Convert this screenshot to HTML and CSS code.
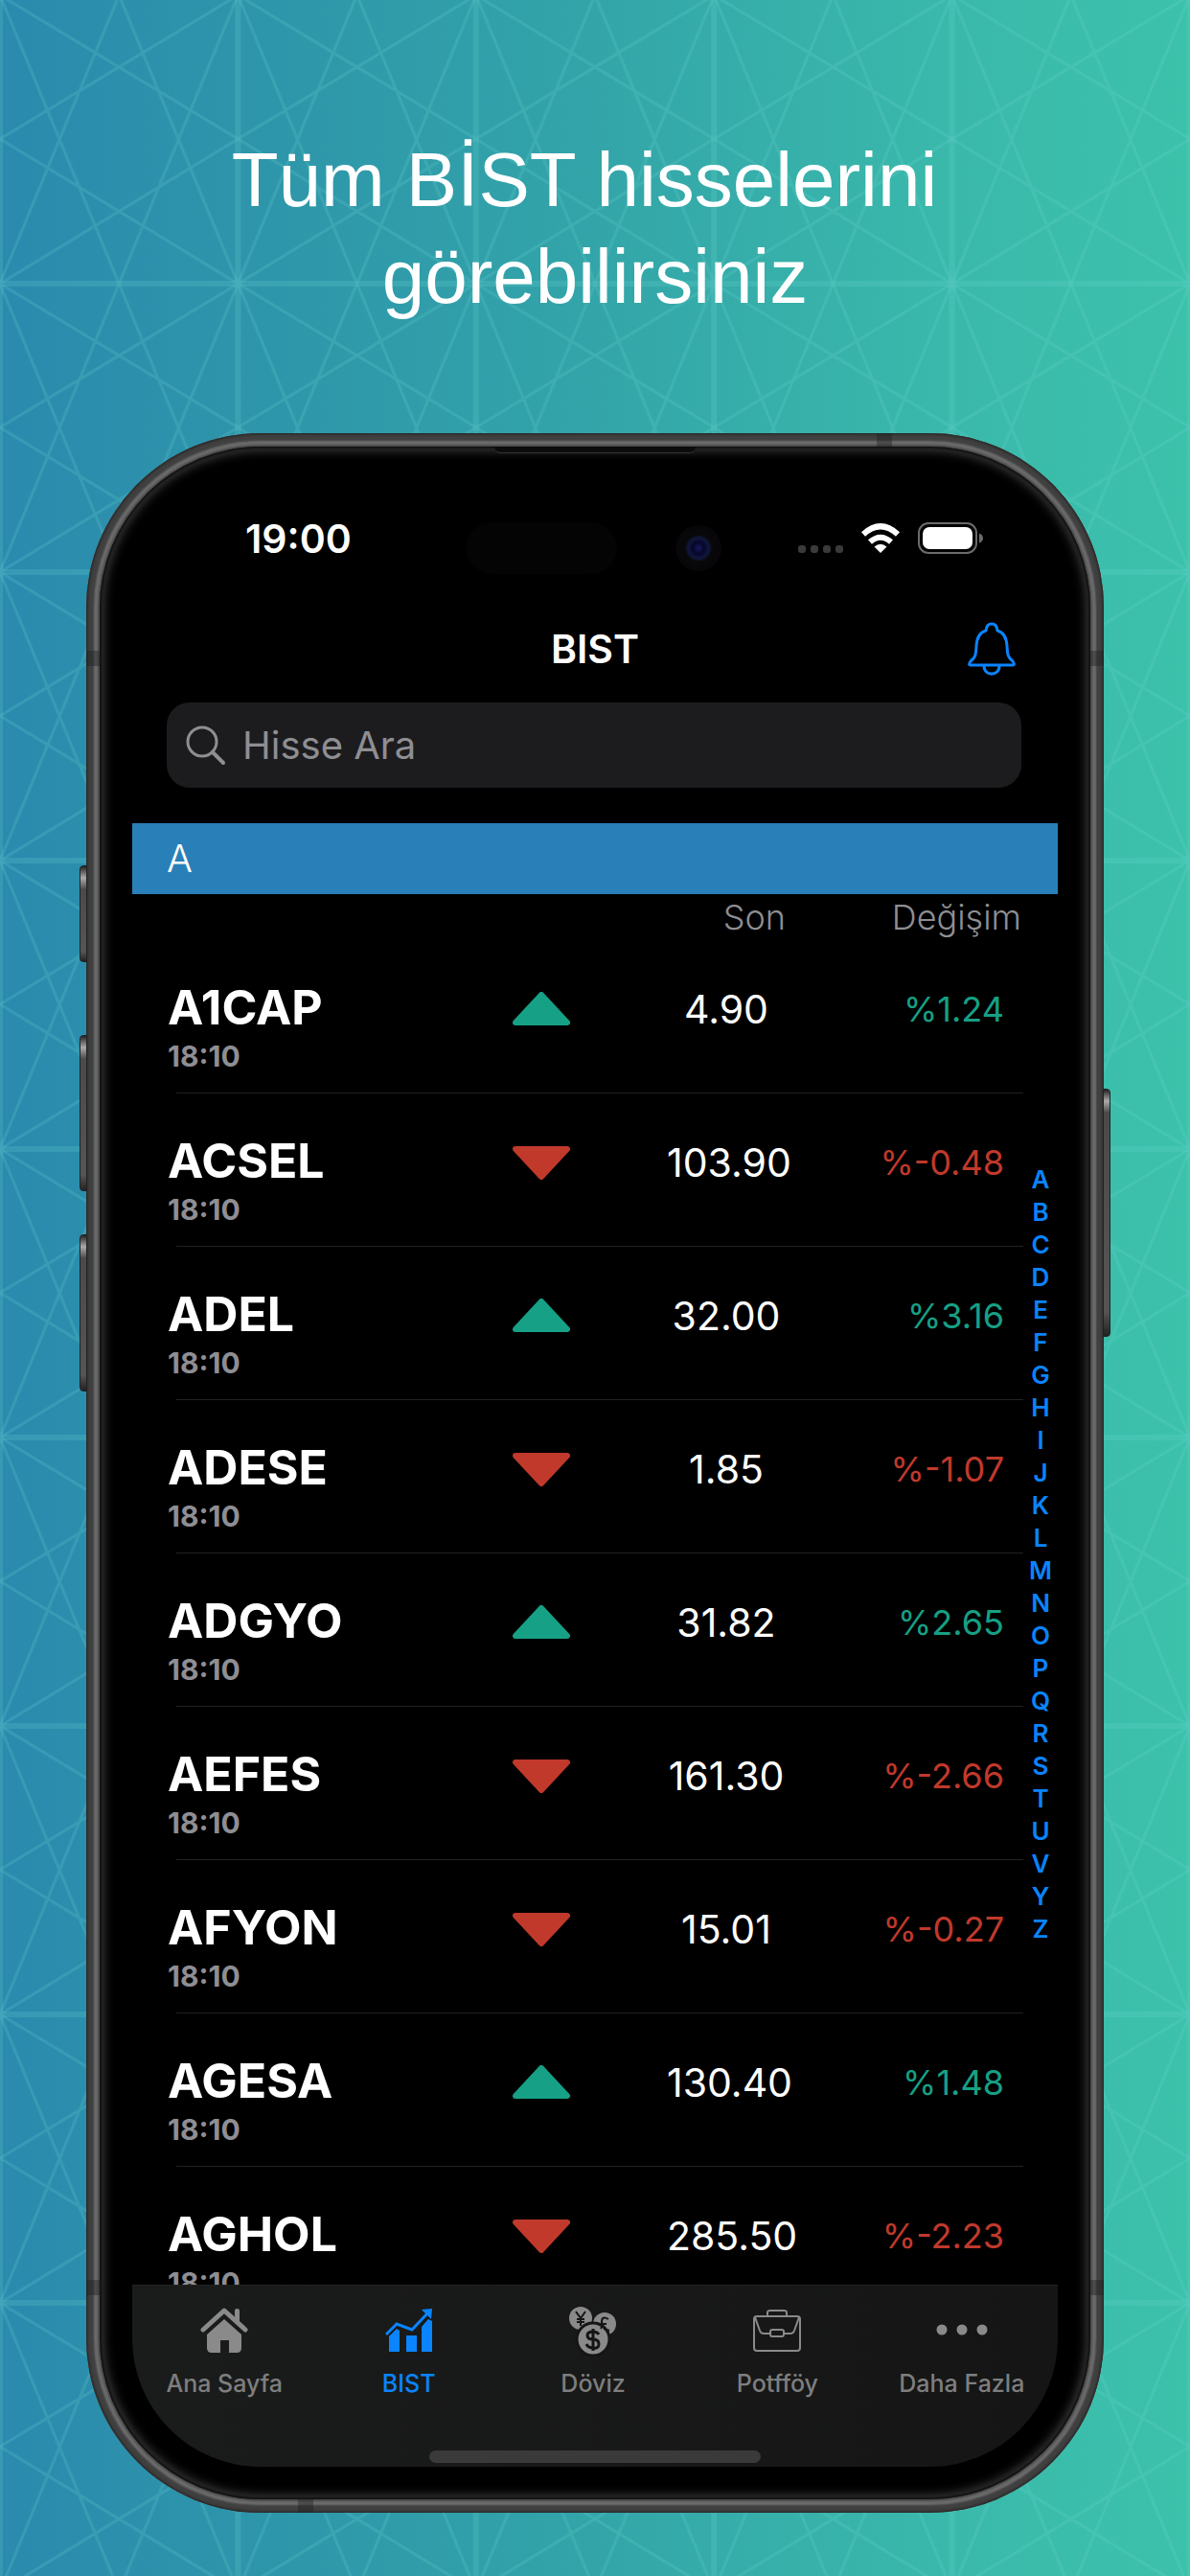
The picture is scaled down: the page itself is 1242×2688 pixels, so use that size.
FILE: index.html
```html
<!DOCTYPE html>
<html lang="tr">
<head>
    <meta charset="UTF-8">
    <meta name="viewport" content="width=device-width, initial-scale=1.0">
    <title>BIST</title>
    <link rel="stylesheet" href="styles.css">
</head>
<body>
    <!-- Arka plan deseni -->
    <svg class="pattern" aria-hidden="true">
        <defs>
            <pattern id="stars" patternUnits="userSpaceOnUse" x="0" y="-5" width="20%" height="301" viewBox="0 0 248 301" preserveAspectRatio="none">
                <g fill="none" stroke="#6fd8d0" stroke-opacity="0.2">
                    <path stroke-width="6" d="M0 0H248M0 0V301M248 0V301M0 301H248"/>
                    <path stroke-width="3" d="M0 0L124 301L248 0M0 301L124 0L248 301M0 0L248 150M248 0L0 150L248 301M0 301L248 150"/>
                </g>
            </pattern>
        </defs>
        <rect width="100%" height="100%" fill="url(#stars)"/>
    </svg>

    <h1 class="slogan">Tüm BİST hisselerini&nbsp;<br>görebilirsiniz</h1>

    <div class="phone">
        <span class="key key-action"></span>
        <span class="key key-up"></span>
        <span class="key key-down"></span>
        <span class="key key-power"></span>
        <span class="band band-left-top"></span>
        <span class="band band-right-top"></span>
        <span class="band band-left-bottom"></span>
        <span class="band band-right-bottom"></span>
        <span class="band band-top"></span>
        <span class="band band-bottom"></span>
        <div class="bezel">
            <span class="speaker"></span>
            <div class="screen">
                <div class="status">
                    <span class="clock">19:00</span>
                    <span class="island"></span>
                    <span class="camera"></span>
                    <div class="status-icons">
                        <span class="cell"><i></i><i></i><i></i><i></i></span>
                        <svg width="42" height="32" viewBox="0 0 42 32" fill="none" stroke="#fff">
                            <path stroke-width="6" d="M3 11.5Q21 -5 39 11.5"/>
                            <path stroke-width="6" d="M10 19.5Q21 10 32 19.5"/>
                            <path fill="#fff" stroke="none" d="M14.500 24.500Q21 19 27.500 24.500L21 31Z"/>
                        </svg>
                        <svg width="70" height="34" viewBox="0 0 70 34">
                            <rect x="1" y="1" width="60" height="31" rx="10" fill="none" stroke="#6b6b6b" stroke-width="2"/>
                            <rect x="5" y="5" width="52" height="23" rx="7" fill="#fff"/>
                            <path d="M64 11.500q4 1.500 4 5t-4 5z" fill="#6b6b6b"/>
                        </svg>
                    </div>
                </div>

                <header class="navbar">
                    <h2>BIST</h2>
                    <button type="button" class="bell" aria-label="Bildirimler">
                        <svg width="50" height="56" viewBox="0 0 50 56" fill="none" stroke="#0a84ff" stroke-width="3" stroke-linejoin="round">
                            <path d="M19 9C19.500 4 22 2 25 2S30.500 4 31 9C38 11 40.500 17 41 25C41.500 35 42 37 47 41C49 44 49 45 46 45H4C1 45 1 44 3 41C8 37 8.500 35 9 25C9.500 17 12 11 19 9Z"/>
                            <path d="M17 46C17 57 33 57 33 46"/>
                        </svg>
                    </button>
                </header>

                <label class="search">
                    <svg width="42" height="42" viewBox="0 0 42 42" fill="none" stroke="#8e8e93" stroke-linecap="round">
                        <circle cx="17" cy="17" r="15" stroke-width="3"/>
                        <path stroke-width="4" d="M28 28L39 39"/>
                    </svg>
                    <input type="search" placeholder="Hisse Ara" aria-label="Hisse Ara">
                </label>

                <div class="section">A</div>

                <div class="list">
                    <table>
                        <thead>
                            <tr><th></th><th></th><th class="col-last">Son</th><th class="col-change">Değişim</th></tr>
                        </thead>
                        <tbody id="rows"></tbody>
                    </table>
                    <nav class="letters" id="letters"></nav>
                </div>

                <nav class="tabs">
                    <a href="#">
                        <svg width="50" height="50" viewBox="0 0 50 50">
                            <path d="M3 24L25 4L47 24" fill="none" stroke="#8a8a8a" stroke-width="5" stroke-linecap="round" stroke-linejoin="round"/>
                            <path d="M36 4Q36 2 38.500 2T41 4V16L36 11ZM25 13L43 29V43Q43 48 38 48H30V35H21V48H12Q7 48 7 43V29Z" fill="#8a8a8a"/>
                        </svg>
                        <span>Ana Sayfa</span>
                    </a>
                    <a href="#" class="active">
                        <svg width="50" height="50" viewBox="0 0 50 50" fill="#0a84ff">
                            <path d="M4 31L12 23L15 25V47H4ZM22 30H33V47H22ZM38 21L45 13L49 15V47H38Z"/>
                            <path d="M1 29L12 18L28 24L45 6" fill="none" stroke="#0a84ff" stroke-width="3"/>
                            <path d="M38 3L49 2L48 13Z"/>
                        </svg>
                        <span>BIST</span>
                    </a>
                    <a href="#">
                        <svg width="50" height="54" viewBox="0 0 50 54">
                            <circle cx="12" cy="14" r="12" fill="#8a8a8a"/>
                            <circle cx="37" cy="20" r="12" fill="#8a8a8a"/>
                            <circle cx="25" cy="36" r="17" fill="#8a8a8a" stroke="#151515" stroke-width="3"/>
                            <g fill="none" stroke="#151515" stroke-width="2">
                                <path d="M7 7L12 14L17 7M12 14V22M8 15H16M8 18H16"/>
                                <path d="M41 15Q34 11 34 18Q35 22 33 25M32 20H39M36 25L42 27"/>
                                <path stroke-width="3" d="M31 31Q29 28 25 28Q19 28 19 32T25 36T31 41T25 45Q20 45 18 41M25 25V48"/>
                            </g>
                        </svg>
                        <span>Döviz</span>
                    </a>
                    <a href="#">
                        <svg width="50" height="50" viewBox="0 0 50 50" fill="none" stroke="#8a8a8a" stroke-width="2">
                            <rect x="1" y="10" width="48" height="36" rx="3"/>
                            <path d="M15 9V6Q15 4 18 4H32Q35 4 35 6V9M2 11L7 25Q8 28 11 28H18M48 11L43 25Q42 28 39 28H32"/>
                            <rect x="18" y="24" width="14" height="7" rx="2"/>
                        </svg>
                        <span>Potfföy</span>
                    </a>
                    <a href="#">
                        <svg width="54" height="50" viewBox="0 0 54 50" fill="#8a8a8a">
                            <circle cx="6" cy="24" r="5.500"/><circle cx="27" cy="24" r="5.500"/><circle cx="48" cy="24" r="5.500"/>
                        </svg>
                        <span>Daha Fazla</span>
                    </a>
                </nav>
                <span class="home-bar"></span>
            </div>
        </div>
    </div>

    <script src="script.js"></script>
</body>
</html>
```

FILE: styles.css
```css
* {
    box-sizing: border-box;
}
body {
    font-family: Inter, "Liberation Sans", sans-serif;
    margin: 0;
    padding: 77px 90px 66px;
    position: relative;
    color: #fff;
    background: linear-gradient(90deg, #2b8aae 0%, #2e97aa 25%, #33a5a9 50%, #3ab9ab 80%, #3cc1ab 100%);
}
.pattern {
    position: absolute;
    top: 0;
    left: 0;
    width: 100%;
    height: 100%;
}
.slogan {
    position: relative;
    margin: 0 0 60px;
    padding: 60px 0 53px;
    font: 400 80px/101px "Liberation Sans", Arial, sans-serif;
    text-align: center;
}

/* Telefon çerçevesi */
.phone {
    position: relative;
    padding: 14px;
    border-radius: 182px;
    background: #4a4a4a;
    box-shadow: inset 0 0 3px 1px #222, inset 0 0 2px 8px #404040, inset 0 0 2px 12px #6c6c6c;
}
.bezel {
    position: relative;
    padding: 34px;
    border-radius: 168px;
    background: #000;
    box-shadow: inset 0 0 2px 2px #111, inset 0 0 12px 3px #4a4a4a;
}
.screen {
    position: relative;
    overflow: hidden;
    border-radius: 134px;
    background: #000;
}
.key {
    position: absolute;
    left: -7px;
    width: 8px;
    border-radius: 4px 0 0 4px;
    border: 1px solid #222;
    background: linear-gradient(#222, #aaa 12px, #4a4a4a 24px, #555 90%, #222);
}
.key-action {
    top: 451px;
    height: 101px;
}
.key-up {
    top: 628px;
    height: 163px;
}
.key-down {
    top: 836px;
    height: 164px;
}
.key-power {
    top: 684px;
    left: auto;
    right: -7px;
    height: 259px;
    border-radius: 0 4px 4px 0;
}
.band {
    position: absolute;
    width: 14px;
    height: 16px;
    background: rgba(30, 30, 30, 0.4);
}
.band-left-top {
    top: 227px;
    left: 0;
}
.band-right-top {
    top: 227px;
    right: 0;
}
.band-left-bottom {
    bottom: 227px;
    left: 0;
}
.band-right-bottom {
    bottom: 227px;
    right: 0;
}
.band-top {
    top: 0;
    right: 221px;
    width: 16px;
    height: 14px;
}
.band-bottom {
    bottom: 0;
    left: 221px;
    width: 16px;
    height: 14px;
}
.speaker {
    position: absolute;
    top: 0;
    left: 50%;
    width: 210px;
    height: 7px;
    margin-left: -105px;
    border-radius: 0 0 6px 6px;
    background: #0c0c0c;
    border-bottom: 1px solid #333;
}

/* Durum çubuğu */
.status {
    display: flex;
    align-items: center;
    justify-content: space-between;
    height: 124px;
    padding: 0 76px 0 118px;
}
.clock {
    font-size: 41px;
    font-weight: 600;
}
.island {
    position: absolute;
    top: 45px;
    left: 348px;
    width: 158px;
    height: 54px;
    border-radius: 27px;
    background: #040404;
}
.camera {
    position: absolute;
    top: 48px;
    left: 567px;
    width: 48px;
    height: 48px;
    border-radius: 50%;
    background: radial-gradient(circle, #1a1a5a 0, #06062a 6px, #10183c 11px, #08080a 14px, #070508 24px);
}
.status-icons {
    display: flex;
    align-items: center;
    gap: 18px;
}
.cell {
    display: flex;
    gap: 5px;
    padding-top: 22px;
}
.cell i {
    width: 8px;
    height: 8px;
    border-radius: 3px;
    background: #3a3a3a;
}

.navbar {
    display: flex;
    align-items: center;
    justify-content: center;
    position: relative;
    height: 105px;
    margin-bottom: 4px;
}
.navbar h2 {
    margin: 0;
    font-size: 41px;
    font-weight: 600;
}
.bell {
    position: absolute;
    right: 44px;
    padding: 0;
    border: 0;
    background: none;
    line-height: 0;
}

.search {
    display: flex;
    align-items: center;
    gap: 17px;
    height: 89px;
    margin: 0 38px 37px 36px;
    padding: 0 20px;
    border-radius: 24px;
    background: #1c1c1e;
}
.search input {
    flex: 1;
    padding: 0;
    border: 0;
    outline: 0;
    background: none;
    color: #fff;
    font: 400 40px Inter, sans-serif;
}
.search input::placeholder {
    color: #8e8e93;
}

.section {
    height: 74px;
    padding-left: 36px;
    background: #2980b9;
    font-size: 40px;
    font-weight: 300;
    line-height: 74px;
}

/* Hisse listesi */
.list {
    position: relative;
    height: 1451px;
    overflow: hidden;
}
table {
    width: 100%;
    border-collapse: collapse;
    table-layout: fixed;
}
th {
    height: 48px;
    padding: 0;
    font-size: 36px;
    font-weight: 300;
    line-height: 48px;
    color: #8e8e93;
    text-align: right;
}
th:first-child {
    width: 356px;
}
th:nth-child(2) {
    width: 142px;
}
.col-last {
    width: 184px;
}
th.col-change {
    padding-right: 38px;
}
td {
    height: 160px;
    padding: 0 0 16px;
    font-size: 41px;
    font-weight: 400;
    text-align: center;
    background: linear-gradient(#222, #222) left bottom / 100% 1px no-repeat;
}
td.name {
    padding: 26px 0 0 37px;
    text-align: left;
    background-position: 46px bottom;
}
td.name strong,
td.name time {
    display: block;
}
td.name strong {
    font-size: 50px;
    font-weight: 700;
    line-height: 56px;
}
td.name time {
    font-size: 30px;
    font-weight: 700;
    line-height: 46px;
    color: #8e8e93;
}
td.price {
    padding-left: 60px;
}
td.change {
    padding-right: 56px;
    font-size: 36px;
    text-align: right;
    background-position: -36px bottom;
}
td svg {
    display: block;
    margin: 0 auto;
}
.up {
    color: #16a085;
}
.down {
    color: #c0392b;
}
.letters {
    position: absolute;
    top: 281px;
    right: 4px;
    width: 28px;
}
.letters a {
    display: block;
    height: 34px;
    font-size: 26px;
    font-weight: 600;
    line-height: 34px;
    text-align: center;
    text-decoration: none;
    color: #0a84ff;
}

/* Alt menü */
.tabs {
    display: flex;
    height: 190px;
    padding: 20px 4px 0 0;
    background: linear-gradient(90deg, #1a1c1b, #151515);
    border-top: 1px solid #222;
}
.tabs a {
    flex: 1;
    display: flex;
    flex-direction: column;
    align-items: center;
    font-size: 25px;
    font-weight: 500;
    line-height: 30px;
    text-decoration: none;
    color: #7e7e7e;
}
.tabs svg {
    height: 54px;
    margin-bottom: 13px;
}
.tabs .active {
    color: #0a84ff;
}
.home-bar {
    position: absolute;
    bottom: 4px;
    left: 50%;
    width: 346px;
    height: 13px;
    margin-left: -173px;
    border-radius: 7px;
    background: #3a3a3a;
}
```

FILE: script.js
```js
const stocks = [
    ['A1CAP', '4.90', '1.24'],
    ['ACSEL', '103.90', '-0.48'],
    ['ADEL', '32.00', '3.16'],
    ['ADESE', '1.85', '-1.07'],
    ['ADGYO', '31.82', '2.65'],
    ['AEFES', '161.30', '-2.66'],
    ['AFYON', '15.01', '-0.27'],
    ['AGESA', '130.40', '1.48'],
    ['AGHOL', '285.50', '-2.23']
];

const arrows = {
    up: 'M31 3L58 32H4Z',
    down: 'M31 33L58 4H4Z'
};

document.getElementById('rows').innerHTML = stocks.map(function([name, price, change]) {
    const dir = change < 0 ? 'down' : 'up';
    return `<tr>
        <td class="name"><strong>${name}</strong><time>18:10</time></td>
        <td class="${dir}"><svg width="62" height="36" viewBox="0 0 62 36"><path d="${arrows[dir]}" fill="currentColor" stroke="currentColor" stroke-width="6" stroke-linejoin="round"/></svg></td>
        <td class="price">${price}</td>
        <td class="change ${dir}">%${change}</td>
    </tr>`;
}).join('');

document.getElementById('letters').innerHTML = [...'ABCDEFGHIJKLMNOPQRSTUVYZ'].map(function(letter) {
    return `<a href="#">${letter}</a>`;
}).join('');
```
